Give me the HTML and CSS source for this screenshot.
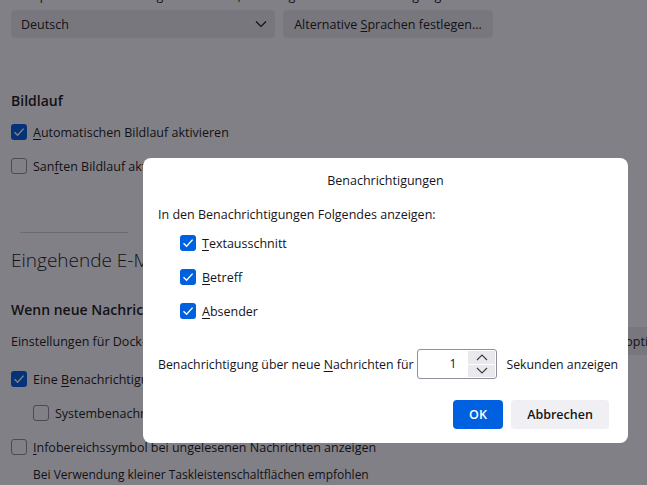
FILE: index.html
```html
<!DOCTYPE html>
<html lang="de">
<head>
    <meta charset="UTF-8">
    <title>Einstellungen</title>
    <link rel="stylesheet" href="styles.css">
</head>
<body>

    <div class="prefs">
        <p class="cut-line">Sprache für die Anzeige von Menüs, Meldungen und Benachrichtigungen</p>

        <!-- Sprache -->
        <div class="lang-row">
            <div class="select">
                <span>Deutsch</span>
                <svg width="12" height="8" viewBox="0 0 12 8"><path d="M1 1.5 L6 6.5 L11 1.5" fill="none" stroke="#1c1b22" stroke-width="1.2"/></svg>
            </div>
            <button class="btn">Alternative <u>S</u>prachen festlegen...</button>
        </div>

        <!-- Bildlauf -->
        <h3 class="section-title">Bildlauf</h3>
        <label class="check-row"><span class="box checked"></span><span><u>A</u>utomatischen Bildlauf aktivieren</span></label>
        <label class="check-row"><span class="box"></span><span>San<u>f</u>ten Bildlauf aktivieren</span></label>

        <hr class="sep">

        <h2 class="big-title">Eingehende E-Mails</h2>
        <h3 class="sub-title">Wenn neue Nachrichten eintreffen:</h3>

        <div class="dock-row">
            <span>Einstellungen für Dock-Symbol</span>
            <button class="btn btn-right">Benachrichtigungsoptionen</button>
        </div>

        <label class="check-row first"><span class="box checked"></span><span>Eine <u>B</u>enachrichtigung anzeigen</span></label>
        <label class="check-row indent"><span class="box"></span><span>Systembenachrichtigung verwenden</span></label>
        <label class="check-row"><span class="box"></span><span><u>I</u>nfobereichssymbol bei ungelesenen Nachrichten anzeigen</span></label>
        <p class="hint">Bei Verwendung kleiner Taskleistenschaltflächen empfohlen</p>
    </div>

    <div class="overlay"></div>

    <!-- Dialog -->
    <div class="dialog">
        <div class="dialog-title">Benachrichtigungen</div>
        <p class="dialog-text">In den Benachrichtigungen Folgendes anzeigen:</p>
        <div class="dialog-checks">
            <label class="check-row"><span class="box checked"></span><span><u>T</u>extausschnitt</span></label>
            <label class="check-row"><span class="box checked"></span><span><u>B</u>etreff</span></label>
            <label class="check-row"><span class="box checked"></span><span><u>A</u>bsender</span></label>
        </div>
        <div class="duration-row">
            <span>Benachrichtigung über neue <u>N</u>achrichten für</span>
            <div class="spin">
                <span class="spin-value">1</span>
                <div class="spin-buttons">
                    <div class="spin-btn"><svg width="12" height="7" viewBox="0 0 12 7"><path d="M1 6 L6 1 L11 6" fill="none" stroke="#3a3944" stroke-width="1.1"/></svg></div>
                    <div class="spin-btn"><svg width="12" height="7" viewBox="0 0 12 7"><path d="M1 1 L6 6 L11 1" fill="none" stroke="#3a3944" stroke-width="1.1"/></svg></div>
                </div>
            </div>
            <span>Sekunden anzeigen</span>
        </div>
        <div class="dialog-buttons">
            <button class="btn-ok">OK</button>
            <button class="btn-cancel">Abbrechen</button>
        </div>
    </div>

</body>
</html>
```

FILE: styles.css
```css
body {
    margin: 0;
    font-family: "Open Sans", Arial, sans-serif;
    font-size: 12.5px;
    color: #1c1b22;
    background-color: #fbfbfe;
    width: 647px;
    height: 485px;
    overflow: hidden;
    position: relative;
}
u {
    text-decoration-thickness: 1px;
    text-underline-offset: 2px;
}
.prefs {
    padding-left: 11px;
}
.cut-line {
    margin: -13px 0 0 22px;
    height: 18px;
    line-height: 18px;
    white-space: nowrap;
}
.lang-row {
    display: flex;
    gap: 8px;
    margin-top: 5px;
}
.select {
    width: 264px;
    height: 28px;
    box-sizing: border-box;
    background-color: #e9e9ed;
    border-radius: 4px;
    display: flex;
    align-items: center;
    justify-content: space-between;
    padding: 0 8px 0 10px;
}
.btn {
    height: 28px;
    font-family: inherit;
    font-size: 12.5px;
    color: #1c1b22;
    background-color: #e9e9ed;
    border: none;
    border-radius: 4px;
    padding: 0 13px;
    white-space: nowrap;
}
.lang-row .btn {
    width: 210px;
    padding: 0 8px;
}
.section-title {
    font-size: 14px;
    font-weight: 600;
    margin: 53px 0 0 0;
    line-height: 20px;
}
.check-row {
    display: flex;
    align-items: center;
    gap: 6px;
    height: 20px;
}
.prefs .check-row {
    margin-top: 14px;
}
.prefs .section-title + .check-row {
    margin-top: 11px;
}
.prefs .check-row.first {
    margin-top: 14px;
}
.check-row.indent {
    margin-left: 22px;
}
.box {
    width: 16px;
    height: 16px;
    box-sizing: border-box;
    border: 1px solid #8f8f9d;
    border-radius: 3px;
    background-color: #fbfbfe;
    flex-shrink: 0;
}
.box.checked {
    border: none;
    background-color: #0061e0;
    background-image: url("data:image/svg+xml,%3Csvg xmlns='http://www.w3.org/2000/svg' width='16' height='16' viewBox='0 0 16 16'%3E%3Cpath d='M3.5 8.2 L6.6 11.2 L12.6 4.6' fill='none' stroke='white' stroke-width='1.4'/%3E%3C/svg%3E");
}
.sep {
    width: 108px;
    margin: 56px 0 0 9px;
    border: none;
    border-top: 1px solid #d0d0d7;
}
.big-title {
    font-size: 19px;
    font-weight: 300;
    margin: 14px 0 0 0;
    line-height: 26px;
}
.sub-title {
    font-size: 14px;
    font-weight: 600;
    margin: 27px 0 0 0;
    line-height: 20px;
}
.dock-row {
    display: flex;
    align-items: center;
    justify-content: space-between;
    margin-top: 7px;
    height: 28px;
}
.btn-right {
    margin-right: -44px;
}
.hint {
    margin: 9px 0 0 22px;
    font-size: 12px;
    line-height: 18px;
}
.overlay {
    position: absolute;
    inset: 0;
    background-color: rgba(8, 6, 14, 0.5);
}
.dialog {
    position: absolute;
    left: 143px;
    top: 158px;
    width: 485px;
    height: 285px;
    box-sizing: border-box;
    background-color: #ffffff;
    border-radius: 8px;
    padding: 0 15px;
    color: #15141a;
}
.dialog-title {
    text-align: center;
    font-weight: 500;
    margin-top: 13px;
    line-height: 20px;
}
.dialog-text {
    margin: 14px 0 0 0;
    line-height: 20px;
}
.dialog-checks {
    padding-left: 22px;
    display: flex;
    flex-direction: column;
    gap: 14px;
    margin-top: 8px;
}
.duration-row {
    display: flex;
    align-items: center;
    gap: 4px;
    margin-top: 28px;
    white-space: nowrap;
    font-size: 12.3px;
}
.duration-row > * {
    flex-shrink: 0;
}
.spin {
    width: 80px;
    height: 30px;
    box-sizing: border-box;
    border: 1px solid #8f8f9d;
    border-radius: 3px;
    display: flex;
    margin: 0 5px 0 0;
}
.spin-value {
    flex: 1;
    text-align: right;
    padding-right: 12px;
    line-height: 28px;
}
.spin-buttons {
    width: 27px;
    display: flex;
    flex-direction: column;
    padding: 1px 1px 1px 0;
    gap: 1px;
}
.spin-btn {
    flex: 1;
    background-color: #e9e9ed;
    display: flex;
    align-items: center;
    justify-content: center;
}
.dialog-buttons {
    display: flex;
    justify-content: flex-end;
    gap: 8px;
    margin-top: 21px;
    padding-right: 4px;
}
.btn-ok, .btn-cancel {
    height: 29px;
    border: none;
    border-radius: 4px;
    font-family: inherit;
    font-size: 12.5px;
    font-weight: 600;
}
.btn-ok {
    width: 50px;
    background-color: #0061e0;
    color: #ffffff;
}
.btn-cancel {
    width: 98px;
    background-color: #f0f0f4;
    color: #15141a;
}
```
